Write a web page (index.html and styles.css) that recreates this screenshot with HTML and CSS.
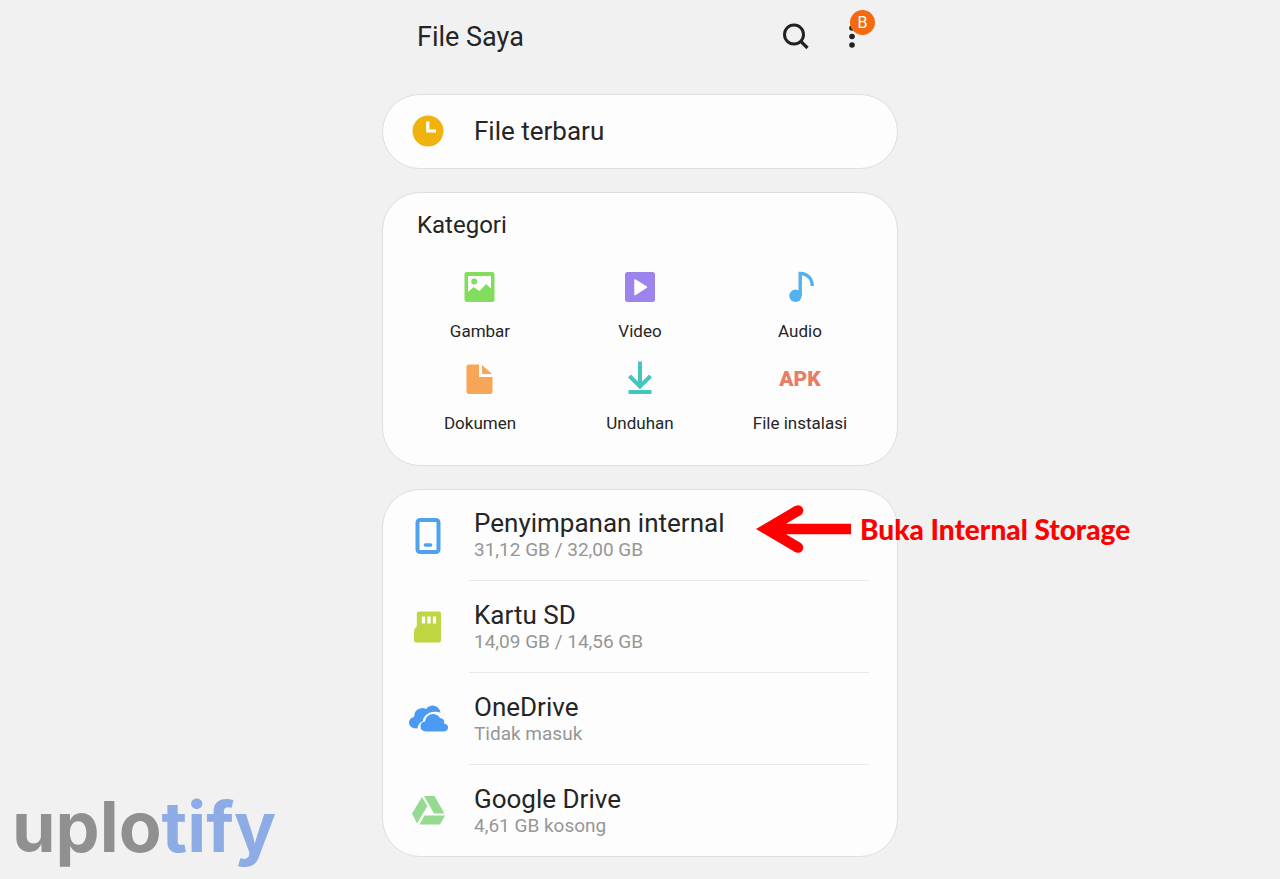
FILE: index.html
```html
<!DOCTYPE html>
<html lang="id">
<head>
<meta charset="utf-8">
<meta name="viewport" content="width=device-width, initial-scale=1">
<title>File Saya</title>
<link rel="stylesheet" href="styles.css">
</head>
<body>
<main class="app">
  <header class="topbar">
    <h1 class="topbar-title">File Saya</h1>
    <button class="icon-button" type="button" aria-label="Cari">
      <svg width="28" height="28" viewBox="0 0 28 28" fill="none" stroke="#222" stroke-width="3"><circle cx="12" cy="11.500" r="9.500"/><path d="M18.800 18.300L25.500 25" stroke-width="3.200"/></svg>
    </button>
    <button class="icon-button" type="button" aria-label="Menu lainnya">
      <svg width="28" height="28" viewBox="0 0 28 28" fill="#222"><circle cx="14" cy="5" r="2.800"/><circle cx="14" cy="13.500" r="2.800"/><circle cx="14" cy="22" r="2.800"/></svg>
      <span class="badge">B</span>
    </button>
  </header>

  <a class="card recent" href="#terbaru">
    <svg class="row-icon" width="40" height="40" viewBox="0 0 40 40"><circle cx="20" cy="20" r="15.500" fill="#f0b20c"/><path d="M19.800 10.500v9.500H28" fill="none" stroke="#fff" stroke-width="3.200"/></svg>
    <span class="row-title">File terbaru</span>
  </a>

  <section class="card categories" aria-labelledby="kategori">
    <h2 class="section-title" id="kategori">Kategori</h2>
    <div class="category-grid">
      <a class="category" href="#gambar">
        <svg width="40" height="36" viewBox="0 0 40 36"><rect x="4.500" y="3" width="30" height="30" rx="2.500" fill="#82dd5f"/><path d="M8 7h23v12.500l-5-4.500-6.500 7-6-4-5.500 5z" fill="#fff"/><circle cx="14.200" cy="12.500" r="3" fill="#82dd5f"/></svg>
        <span>Gambar</span>
      </a>
      <a class="category" href="#video">
        <svg width="40" height="36" viewBox="0 0 40 36"><rect x="5" y="3" width="30" height="30" rx="2.500" fill="#9d84ed"/><path d="M15 11v14.500L26.500 18.200z" fill="#fff" stroke="#fff" stroke-width="1.500" stroke-linejoin="round"/></svg>
        <span>Video</span>
      </a>
      <a class="category" href="#audio">
        <svg width="40" height="36" viewBox="0 0 40 36"><circle cx="15.500" cy="26.800" r="6.200" fill="#52b1ef"/><path d="M20.200 27V4.500c7 0 12 5 12 12.500" fill="none" stroke="#52b1ef" stroke-width="3.400"/></svg>
        <span>Audio</span>
      </a>
      <a class="category" href="#dokumen">
        <svg width="40" height="36" viewBox="0 0 40 36" fill="#f7a657"><path d="M8.500 3.500H19V16h13.500v14.500q0 2.500-2.500 2.500H9q-2.500 0-2.500-2.500v-25q0-2 2-2z"/><path d="M22 4l10 9H22z"/></svg>
        <span>Dokumen</span>
      </a>
      <a class="category" href="#unduhan">
        <svg width="40" height="36" viewBox="0 0 40 36" fill="none" stroke="#43c6bd" stroke-width="4"><path d="M20 .5v25M9.500 15L20 25.500 30.500 15"/><path d="M8.500 31h23"/></svg>
        <span>Unduhan</span>
      </a>
      <a class="category" href="#instalasi">
        <span class="apk" aria-hidden="true">APK</span>
        <span>File instalasi</span>
      </a>
    </div>
  </section>

  <section class="card storage" aria-label="Penyimpanan">
    <a class="storage-row" href="#internal">
      <svg class="row-icon" width="40" height="40" viewBox="0 0 40 40"><rect x="9.500" y="4" width="21" height="32" rx="2.500" fill="none" stroke="#50a2ee" stroke-width="4"/><path d="M17.500 29h5" stroke="#50a2ee" stroke-width="3.600" stroke-linecap="round"/></svg>
      <span class="storage-text"><span class="row-title">Penyimpanan internal</span><span class="row-detail">31,12 GB / 32,00 GB</span></span>
      <span class="callout">
        <svg width="98" height="50" viewBox="0 0 98 50" fill="#fe0000"><path d="M1 25L40 2L45.700 11L31 19.700H96V30.300H31L45.700 39L40 48z"/><circle cx="43" cy="6.500" r="5.250"/><circle cx="43" cy="43.500" r="5.250"/></svg>
        <strong>Buka Internal Storage</strong>
      </span>
    </a>
    <a class="storage-row" href="#kartu-sd">
      <svg class="row-icon" width="40" height="40" viewBox="0 0 40 40"><path d="M11 4.500h20q2 0 2 2v27q0 2-2 2H8q-2 0-2-2V24q0-2 2.800-4.500V6.500q0-2 2.200-2z" fill="#bfd541"/><path d="M15.500 9.500v7M21 9.500v7M26.500 9.500v7" stroke="#fff" stroke-width="3.200"/></svg>
      <span class="storage-text"><span class="row-title">Kartu SD</span><span class="row-detail">14,09 GB / 14,56 GB</span></span>
    </a>
    <a class="storage-row" href="#onedrive">
      <svg class="row-icon" width="40" height="40" viewBox="0 0 40 40" fill="#4b9bf5"><path d="M9.500 29.500q-8.500 0-8.500-6 0-4.500 5-5.500 0-8 8-9 2.500 0 4 1Q20.500 6.500 25 6.500q6 .5 7.500 7-10-2.500-15.500 3.500-2 2.500-2 5-5 2-5.500 7.500z"/><path d="M18 32.500q-5.500-.5-5.500-5 0-4.500 4.500-5 1-7.500 8.500-7.500 4.500.5 6.500 4 5 .5 4 5.500 4 .5 4 4t-4 4z"/></svg>
      <span class="storage-text"><span class="row-title">OneDrive</span><span class="row-detail">Tidak masuk</span></span>
    </a>
    <a class="storage-row" href="#google-drive">
      <svg class="row-icon" width="40" height="40" viewBox="0 0 40 40" fill="#96da92"><path d="M14 6l5.500 9L9 32.500 4 22.500z"/><path d="M16 5h10.500L36.500 22.500H26z"/><path d="M16.500 24.500H37L32 33.500H11.500z"/></svg>
      <span class="storage-text"><span class="row-title">Google Drive</span><span class="row-detail">4,61 GB kosong</span></span>
    </a>
  </section>
</main>
<div class="brand">uplo<span class="brand-accent">tify</span></div>
</body>
</html>
```
FILE: styles.css
```css
* { box-sizing: border-box; }
body {
  margin: 0;
  background: #f1f1f1;
  color: #252525;
  font-family: Roboto, "Liberation Sans", sans-serif;
}
a { color: inherit; text-decoration: none; }
h1, h2 { margin: 0; font-weight: 400; }
svg { display: block; flex: none; }

.app {
  max-width: 516px;
  margin: 0 auto;
  padding-bottom: 23px;
  display: flex;
  flex-direction: column;
  gap: 23px;
}
.topbar {
  display: flex;
  align-items: center;
  gap: 28px;
  padding: 21px 32px 18px 35px;
}
.topbar-title { flex: 1; font-size: 27px; line-height: 32px; }
.icon-button {
  position: relative;
  padding: 0;
  border: 0;
  background: none;
}
.badge {
  position: absolute;
  top: -13px;
  right: -9px;
  width: 25px;
  height: 25px;
  border-radius: 50%;
  background: #f36a10;
  color: #fff;
  font: 16px/25px Roboto, sans-serif;
  text-align: center;
}

.card {
  background: #fdfdfd;
  border: 1px solid #dedede;
  border-radius: 38px;
}
.row-icon { margin: 0 26px 0 25px; }
.row-title { font-size: 26px; line-height: 28px; }
.recent { display: flex; align-items: center; padding: 16px 0 17px; }

.categories { padding: 16px 17px 32px; }
.section-title { padding-left: 17px; font-size: 24px; line-height: 32px; }
.category-grid {
  display: grid;
  grid-template-columns: repeat(3, 1fr);
  row-gap: 20px;
  padding-top: 28px;
}
.category {
  display: flex;
  flex-direction: column;
  align-items: center;
  gap: 16px;
  font-size: 17px;
  line-height: 20px;
}
.apk {
  color: #e87c65;
  font-size: 21px;
  line-height: 36px;
  font-weight: 900;
}

.storage-row {
  position: relative;
  display: flex;
  align-items: center;
  min-height: 92px;
}
.storage-row:first-child,
.storage-row:last-child { min-height: 91px; }
.storage-text {
  flex: 1;
  align-self: stretch;
  display: flex;
  flex-direction: column;
  justify-content: center;
  gap: 2px;
  margin: 0 28px 0 -5px;
  padding-left: 5px;
  border-bottom: 1px solid #e8e8e8;
  white-space: nowrap;
}
.storage-row:last-child .storage-text { border-bottom: 0; }
.row-detail { color: #969696; font-size: 19px; line-height: 22px; }
.callout {
  position: absolute;
  left: 372px;
  top: 14px;
  display: flex;
  align-items: center;
  gap: 7px;
  color: #fe0000;
  font: 700 28px/34px Lato, sans-serif;
  white-space: nowrap;
}

.brand {
  position: fixed;
  left: 12px;
  bottom: 12px;
  color: #909090;
  font: 700 70px/80px Inter, sans-serif;
}
.brand-accent { color: #8dace5; }
```
